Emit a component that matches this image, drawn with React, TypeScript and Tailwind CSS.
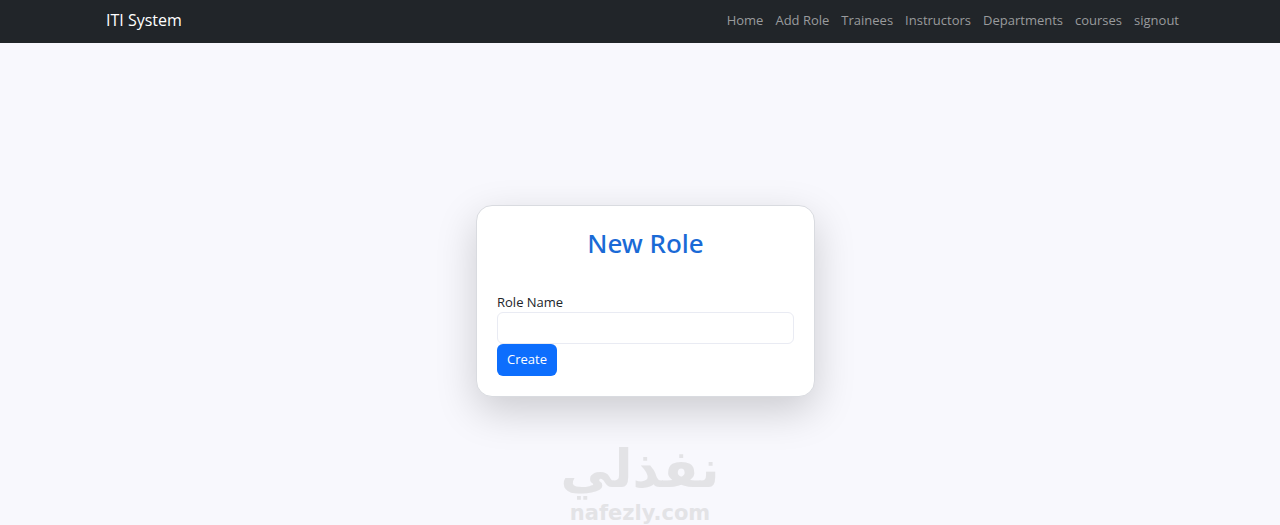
import React from "react";

const links = ["Home", "Add Role", "Trainees", "Instructors", "Departments", "courses", "signout"];

function Navbar() {
  return (
    <header className="h-[43px] shrink-0 bg-[#212529]">
      <nav className="flex h-10 items-center justify-between pr-[101px] pl-[106px]">
        <a href="#" className="text-base text-white">
          ITI System
        </a>
        <ul className="flex gap-3 text-[13px] leading-5">
          {links.map((link) => (
            <li key={link}>
              <a href="#" className="text-[#999b9d]">
                {link}
              </a>
            </li>
          ))}
        </ul>
      </nav>
    </header>
  );
}

function RoleCard() {
  return (
    <section className="w-[339px] rounded-2xl border border-[#d9dbe0] bg-white p-5 shadow-[0_14px_40px_rgba(0,0,0,0.18)]">
      <h1 className="text-center font-['Noto_Sans',sans-serif] text-[26px] leading-[34px] font-medium text-[#1a6ad6]">
        New Role
      </h1>
      <form className="mt-8 flex flex-col items-start" onSubmit={(e) => e.preventDefault()}>
        <label htmlFor="role-name" className="text-[13px] leading-5 text-[#212529]">
          Role Name
        </label>
        <input
          id="role-name"
          type="text"
          className="h-8 w-full rounded-md border border-[#e9ebf3] bg-white px-3 text-[13px]"
        />
        <button type="submit" className="h-8 rounded-md bg-[#0d6efd] px-[10px] text-[13px] text-white">
          Create
        </button>
      </form>
    </section>
  );
}

function Watermark() {
  return (
    <div className="pointer-events-none absolute inset-x-0 bottom-0 flex flex-col items-center font-['DejaVu_Sans',sans-serif] font-bold text-[#e3e3e6]">
      <span dir="rtl" lang="ar" className="text-[52px] leading-[64px]">
        نفذلي
      </span>
      <span className="text-[21px] leading-6">nafezly.com</span>
    </div>
  );
}

export default function App() {
  return (
    <div className="relative flex min-h-screen flex-col overflow-hidden bg-[#f8f8fd] font-['Open_Sans','Noto_Sans',sans-serif]">
      <Navbar />
      <main className="flex grow items-center justify-center pt-[34px] pl-[11px]">
        <RoleCard />
      </main>
      <Watermark />
    </div>
  );
}
